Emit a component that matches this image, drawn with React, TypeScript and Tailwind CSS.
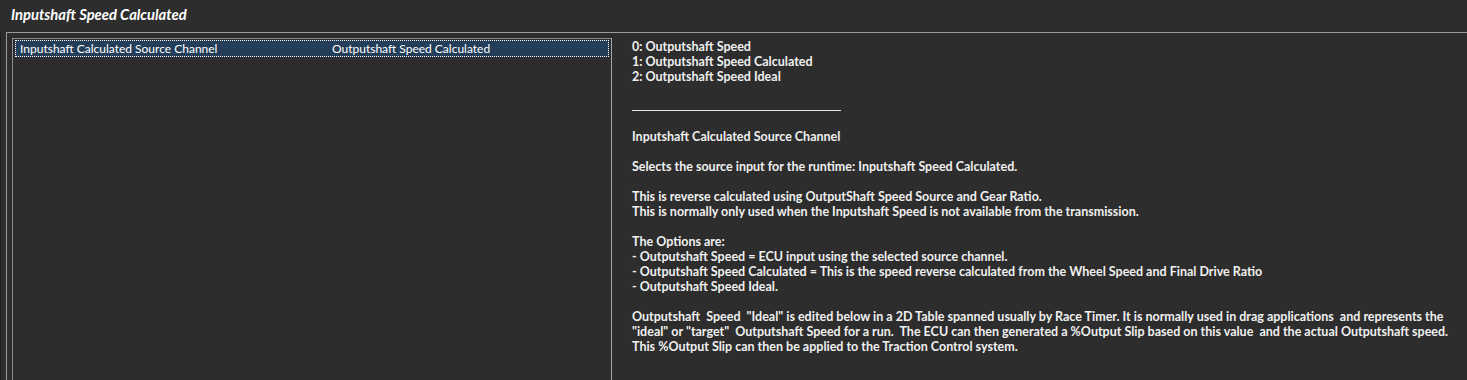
import React from "react";

const lines: string[] = [
  "0: Outputshaft Speed",
  "1: Outputshaft Speed Calculated",
  "2: Outputshaft Speed Ideal",
  "",
  "__RULE__",
  "",
  "Inputshaft Calculated Source Channel",
  "",
  "Selects the source input for the runtime: Inputshaft Speed Calculated.",
  "",
  "This is reverse calculated using OutputShaft Speed Source and Gear Ratio.",
  "This is normally only used when the Inputshaft Speed is not available from the transmission.",
  "",
  "The Options are:",
  "- Outputshaft Speed = ECU input using the selected source channel.",
  "- Outputshaft Speed Calculated = This is the speed reverse calculated from the Wheel Speed and Final Drive Ratio",
  "- Outputshaft Speed Ideal.",
  "",
  'Outputshaft  Speed  "Ideal" is edited below in a 2D Table spanned usually by Race Timer. It is normally used in drag applications  and represents the',
  '"ideal" or "target"  Outputshaft Speed for a run.  The ECU can then generated a %Output Slip based on this value  and the actual Outputshaft speed.',
  "This %Output Slip can then be applied to the Traction Control system.",
];

export default function App() {
  return (
    <div className="w-[1467px] h-[380px] overflow-hidden bg-[#2d2d2d] text-[#f0f0f0] font-['Lato',sans-serif] flex flex-col">
      {/* Title bar */}
      <div className="h-[32px] shrink-0 pl-[11px] pb-[4px] flex items-center">
        <span className="text-[14.75px] font-bold italic text-white">Inputshaft Speed Calculated</span>
      </div>

      {/* Group box */}
      <div className="flex-1 flex pl-[1px] border-l border-[#1f1f1f]">
        <div className="ml-[4px] flex-1 flex border-t border-l border-[#9c9c9c] pt-[5px] pl-[5px]">
          {/* List */}
          <div className="w-[600px] shrink-0 border-t border-l border-[#8c8c8c] border-r border-r-[#a4a4b4] pt-[1px] px-[2px]">
            <div className="h-[17px] border border-dotted border-white bg-[#243e59] flex items-center text-[12px] text-white">
              <span className="pl-[4px] w-[316px]">Inputshaft Calculated Source Channel</span>
              <span>Outputshaft Speed Calculated</span>
            </div>
          </div>

          {/* Description */}
          <div className="flex-1 pl-[20px] pt-[1px] text-[12.5px] font-bold leading-[15px] whitespace-pre">
            {lines.map((l, i) =>
              l === "__RULE__" ? (
                <div key={i} className="h-[15px] flex items-end pb-[3px]">
                  <div className="w-[209px] h-[1px] bg-[#e8e8e8]" />
                </div>
              ) : (
                <div key={i} className="h-[15px]">{l}</div>
              )
            )}
          </div>
        </div>
      </div>
    </div>
  );
}
